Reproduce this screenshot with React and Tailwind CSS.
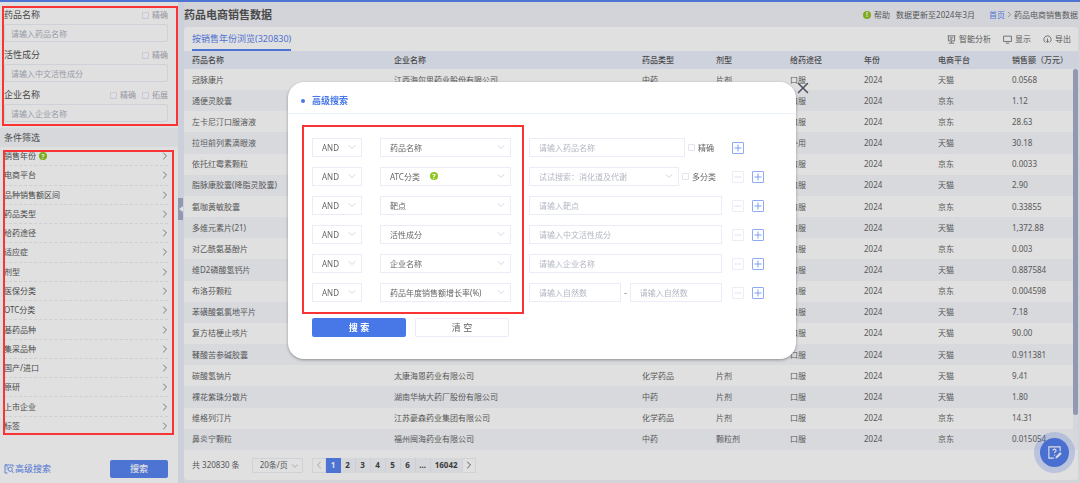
import { ChevronDown, ChevronLeft, ChevronRight, X } from "lucide-react";

const FILTERS = [
  "销售年份",
  "电商平台",
  "品种销售额区间",
  "药品类型",
  "给药途径",
  "适应症",
  "剂型",
  "医保分类",
  "OTC分类",
  "基药品种",
  "集采品种",
  "国产/进口",
  "原研",
  "上市企业",
  "标签",
];

const COLUMNS = [
  { title: "药品名称", width: "w-[202px]" },
  { title: "企业名称", width: "w-[248px]" },
  { title: "药品类型", width: "w-[74px]" },
  { title: "剂型", width: "w-[74px]" },
  { title: "给药途径", width: "w-[74px]" },
  { title: "年份", width: "w-[74px]" },
  { title: "电商平台", width: "w-[74px]" },
  { title: "销售额（万元）", width: "" },
];

const ROWS = [
  ["冠脉康片", "江西海尔思药业股份有限公司", "中药", "片剂", "口服", "2024", "天猫", "0.0568"],
  ["通便灵胶囊", "", "", "", "口服", "2024", "京东", "1.12"],
  ["左卡尼汀口服溶液", "", "", "", "口服", "2024", "京东", "28.63"],
  ["拉坦前列素滴眼液", "", "", "", "外用", "2024", "天猫", "30.18"],
  ["依托红霉素颗粒", "", "", "", "口服", "2024", "京东", "0.0033"],
  ["脂脉康胶囊(降脂灵胶囊)", "", "", "", "口服", "2024", "天猫", "2.90"],
  ["氨咖黄敏胶囊", "", "", "", "口服", "2024", "京东", "0.33855"],
  ["多维元素片(21)", "", "", "", "口服", "2024", "天猫", "1,372.88"],
  ["对乙酰氨基酚片", "", "", "", "口服", "2024", "京东", "0.003"],
  ["维D2磷酸氢钙片", "", "", "", "口服", "2024", "天猫", "0.887584"],
  ["布洛芬颗粒", "", "", "", "口服", "2024", "京东", "0.004598"],
  ["苯磺酸氨氯地平片", "", "", "", "口服", "2024", "天猫", "7.18"],
  ["复方桔梗止咳片", "", "", "", "口服", "2024", "天猫", "90.00"],
  ["鞣酸苦参碱胶囊", "", "", "", "口服", "2024", "天猫", "0.911381"],
  ["碳酸氢钠片", "太康海恩药业有限公司", "化学药品", "片剂", "口服", "2024", "天猫", "9.41"],
  ["裸花紫珠分散片", "湖南华纳大药厂股份有限公司", "中药", "片剂", "口服", "2024", "天猫", "1.80"],
  ["维格列汀片", "江苏豪森药业集团有限公司", "化学药品", "片剂", "口服", "2024", "京东", "14.31"],
  ["鼻炎宁颗粒", "福州闽海药业有限公司", "中药", "颗粒剂", "口服", "2024", "京东", "0.015054"],
];

const CONDITIONS = [
  { field: "药品名称", placeholder: "请输入药品名称", check: "精确", first: true },
  { field: "ATC分类", placeholder: "试试搜索：消化道及代谢", check: "多分类", type: "select", help: true },
  { field: "靶点", placeholder: "请输入靶点" },
  { field: "活性成分", placeholder: "请输入中文活性成分" },
  { field: "企业名称", placeholder: "请输入企业名称" },
  { field: "药品年度销售额增长率(%)", placeholder: "请输入自然数", type: "range" },
];

function GreenMark({ mark }) {
  return (
    <span className="flex size-[8px] shrink-0 items-center justify-center rounded-full bg-[#8fc31f] text-[7px] leading-none font-bold text-white">
      {mark}
    </span>
  );
}

function Check({ label, className = "text-[#a9adb8]" }) {
  return (
    <label className={`flex shrink-0 items-center gap-[3px] ${className}`}>
      <input
        type="checkbox"
        className="size-[7px] shrink-0 appearance-none rounded-[1px] border border-[#e2e5f1] bg-white"
      />
      {label}
    </label>
  );
}

function SideField({ id, label, placeholder, checks }) {
  return (
    <div>
      <div className="flex h-[18px] items-center justify-between">
        <label htmlFor={id} className="text-[9px] text-[#555]">
          {label}
        </label>
        <div className="flex gap-[6px]">
          {checks.map((c) => (
            <Check key={c} label={c} />
          ))}
        </div>
      </div>
      <input
        id={id}
        placeholder={placeholder}
        className="block h-[18px] w-full rounded-[2px] border border-[#eceef7] bg-white px-[6px] placeholder:text-[#aeb2bf]"
      />
    </div>
  );
}

function Sidebar() {
  return (
    <aside className="flex w-[178px] shrink-0 flex-col bg-white">
      <div className="relative flex flex-col gap-1 pt-1 pr-[10px] pb-[6px] pl-1">
        <SideField id="drug" label="药品名称" placeholder="请输入药品名称" checks={["精确"]} />
        <SideField id="ingredient" label="活性成分" placeholder="请输入中文活性成分" checks={["精确"]} />
        <SideField id="company" label="企业名称" placeholder="请输入企业名称" checks={["精确", "拓展"]} />
        <div className="pointer-events-none absolute top-1 right-0 bottom-[2px] left-[2px] z-20 border-2 border-[#fa3434]" />
      </div>
      <h2 className="flex h-[19px] items-center bg-[#f4f6fb] pl-1 text-[9px] text-[#555]">条件筛选</h2>
      <div className="relative flex flex-1 flex-col">
        <ul className="flex flex-1 flex-col pr-[10px] pl-1">
          {FILTERS.map((name, i) => (
            <li key={name} className="flex flex-1 border-b border-dashed border-[#ebecf1] last:border-none">
              <button className="flex w-full items-center gap-[3px] text-[#555]">
                {name}
                {i === 0 && <GreenMark mark="?" />}
                <ChevronRight className="-mr-[3px] ml-auto size-3 text-[#888]" />
              </button>
            </li>
          ))}
        </ul>
        <div className="pointer-events-none absolute top-[3px] right-1 bottom-0 left-[3px] z-20 border-2 border-[#fa3434]" />
      </div>
      <div className="flex h-12 items-end justify-between pr-[10px] pb-[5px] pl-1">
        <a href="#advanced" className="flex h-[18px] items-center text-[9px] text-[#5984f1]">
          <svg viewBox="0 0 20 20" className="mr-px size-[10px]" fill="none" stroke="currentColor" strokeWidth="1.7">
            <path d="M6 2H2v16h5M2 2h16v4M5 6h3M5 10h2" />
            <circle cx="12.5" cy="10.5" r="4.2" />
            <path d="M15.5 13.5L19 18" />
          </svg>
          高级搜索
        </a>
        <button className="h-[18px] w-[58px] rounded-[2px] bg-[#5984f1] text-[9px] font-medium text-white">搜索</button>
      </div>
    </aside>
  );
}

function Toolbar() {
  return (
    <div className="flex gap-3 pr-[7px] text-[#666]">
      <button className="flex items-center gap-[3px]">
        <svg viewBox="0 0 16 16" className="size-[9px]" fill="none" stroke="currentColor" strokeWidth="1.4">
          <path d="M1 1.5h14M2.5 2v8.5h11V2M5 5h6M5 7.5h4M8 11v3M3 14.5h10" />
        </svg>
        智能分析
      </button>
      <button className="flex items-center gap-[3px]">
        <svg viewBox="0 0 16 16" className="size-[9px]" fill="none" stroke="currentColor" strokeWidth="1.4">
          <path d="M1 2h14v9.500H1zM5 14.500h6" />
        </svg>
        显示
      </button>
      <button className="flex items-center gap-[3px]">
        <svg viewBox="0 0 16 16" className="size-[9px]" fill="none" stroke="currentColor" strokeWidth="1.4">
          <path d="M4.500 13.500a6.500 6.500 0 1 1 7 0M8 6v7M5.500 10.500L8 13l2.500-2.500" />
        </svg>
        导出
      </button>
    </div>
  );
}

function DataTable() {
  return (
    <div className="relative min-h-0 flex-1">
      <table className="h-full w-full table-fixed text-left text-[#666]">
        <thead>
          <tr className="h-[18px] bg-[#ebeffc] text-[#555]">
            {COLUMNS.map((c) => (
              <th key={c.title} className={`${c.width} pl-2 font-medium whitespace-nowrap`}>
                {c.title}
              </th>
            ))}
          </tr>
        </thead>
        <tbody>
          {ROWS.map((row) => (
            <tr key={row[0]} className="even:bg-[#f5f7fc]">
              {row.map((cell, i) => (
                <td key={i} className="pl-2 whitespace-nowrap">
                  {cell}
                </td>
              ))}
            </tr>
          ))}
        </tbody>
      </table>
      <div className="absolute top-[18px] right-0 bottom-0 w-[5px] bg-[#f3f5fb]">
        <div className="h-[346px] rounded-full bg-[#a6aecb]" />
      </div>
    </div>
  );
}

function Pager() {
  return (
    <div className="flex h-[30px] items-center pl-2 text-[#666]">
      <span>共 320830 条</span>
      <div className="relative ml-3">
        <select
          aria-label="每页条数"
          className="h-[15px] w-[51px] appearance-none rounded-[1px] border border-[#eceef5] pl-[7px]"
        >
          <option>20条/页</option>
        </select>
        <ChevronDown className="pointer-events-none absolute top-[3px] right-[3px] size-[10px] text-[#bbb]" />
      </div>
      <nav className="ml-[9px] flex h-[15px] font-bold text-[#444]">
        <button aria-label="上一页" className="flex w-[14px] items-center justify-center border border-[#eef0f5] text-[#bbb]">
          <ChevronLeft className="size-3 shrink-0" />
        </button>
        <button className="w-[15px] bg-[#5984f1] text-white">1</button>
        {["2", "3", "4", "5", "6", "..."].map((p) => (
          <button key={p} className="w-[15px] border-r border-[#e9ecf5] bg-[#f3f5fa]">
            {p}
          </button>
        ))}
        <button className="w-[31px] bg-[#f3f5fa]">16042</button>
        <button aria-label="下一页" className="flex w-[14px] items-center justify-center border border-[#eef0f5] text-[#666]">
          <ChevronRight className="size-3 shrink-0" />
        </button>
      </nav>
    </div>
  );
}

function Main() {
  return (
    <main className="flex min-w-0 flex-1 flex-col pr-[2px] pb-[3px]">
      <header className="flex h-[25px] items-center justify-between text-[#666]">
        <h1 className="text-[11px] font-bold text-[#555]">药品电商销售数据</h1>
        <div className="flex items-center">
          <button className="flex items-center gap-[3px]">
            <GreenMark mark="!" />
            帮助
          </button>
          <span className="ml-[6px]">数据更新至2024年3月</span>
          <nav className="ml-[14px] flex items-center">
            <a href="#home" className="text-[#5984f1]">
              首页
            </a>
            <ChevronRight className="size-[9px] text-[#888]" />
            <span>药品电商销售数据</span>
          </nav>
        </div>
      </header>
      <section className="flex min-h-0 flex-1 flex-col rounded-[3px] bg-white">
        <div className="flex h-6 items-center justify-between pl-2">
          <button className="flex h-full items-center border-b-2 border-[#5984f1] pt-[2px] text-[9px] text-[#5984f1]">
            按销售年份浏览(320830)
          </button>
          <Toolbar />
        </div>
        <DataTable />
        <Pager />
      </section>
    </main>
  );
}

function Dropdown({ label, text, className, tone = "text-[#666]", children }) {
  return (
    <div className={`relative shrink-0 ${className}`}>
      <select
        aria-label={label}
        className={`block h-[19px] w-full appearance-none border border-[#eaedf8] bg-white pl-[9px] ${tone}`}
      >
        <option>{text}</option>
      </select>
      {children}
      <ChevronDown className="pointer-events-none absolute top-[3px] right-1 size-3 text-[#c4c8d2]" strokeWidth={1.5} />
    </div>
  );
}

function TextBox({ placeholder, label }) {
  return (
    <input
      aria-label={label}
      placeholder={placeholder}
      className="h-[19px] w-full min-w-0 flex-1 border border-[#eaedf8] px-[9px] placeholder:text-[#b3b7c3]"
    />
  );
}

function SquareButton({ plus }) {
  return (
    <button
      aria-label={plus ? "添加条件" : "删除条件"}
      className={`size-[12px] shrink-0 rounded-[1px] border ${plus ? "border-[#8eaaf3] text-[#7f9ff2]" : "border-[#eceef7] text-[#dfe3f0]"}`}
    >
      <svg viewBox="0 0 10 10" className="size-full" fill="none" stroke="currentColor">
        <path d={plus ? "M1.500 5h7M5 1.500v7" : "M1.500 5h7"} />
      </svg>
    </button>
  );
}

function Condition({ item }) {
  return (
    <div className="flex items-center">
      <Dropdown label="逻辑关系" text="AND" className="w-[50px]" />
      <Dropdown label="检索字段" text={item.field} className="ml-[18px] w-[131px]">
        {item.help && (
          <span className="absolute top-[5px] left-[50px]">
            <GreenMark mark="?" />
          </span>
        )}
      </Dropdown>
      <div className="mr-[10px] ml-[18px] flex w-[193px] items-center gap-[3px]">
        {item.type === "select" ? (
          <Dropdown label={item.field} text={item.placeholder} className="w-[150px]" tone="text-[#b3b7c3]" />
        ) : (
          <TextBox label={item.field} placeholder={item.placeholder} />
        )}
        {item.type === "range" && (
          <>
            <span className="text-[#666]">-</span>
            <TextBox label={`${item.field}上限`} placeholder={item.placeholder} />
          </>
        )}
        {item.check && (
          <div className="w-[34px] shrink-0 whitespace-nowrap">
            <Check label={item.check} className="text-[#666]" />
          </div>
        )}
      </div>
      <div className="flex gap-2">
        {!item.first && <SquareButton />}
        <SquareButton plus />
      </div>
    </div>
  );
}

function AdvancedSearch() {
  return (
    <div className="fixed inset-0 z-30 flex items-start justify-center pt-[82px] pl-1">
      <div role="dialog" aria-label="高级搜索" className="relative w-[508px] rounded-2xl bg-white shadow-[0_1px_3px_rgba(0,0,0,0.35)]">
        <button aria-label="关闭" className="absolute -top-[3px] left-full -ml-[2px] text-[#4d4f5c]">
          <X className="size-[18px]" />
        </button>
        <h2 className="flex h-8 items-center gap-[7px] border-b border-[#eaf1f8] pt-[6px] pl-[13px] text-[9px] font-bold text-[#4878e8]">
          <span className="size-1 rounded-full bg-[#4878e8]" />
          高级搜索
        </h2>
        <form className="pt-6 pb-[22px] pl-6">
          <div className="relative flex flex-col gap-[10px]">
            {CONDITIONS.map((item) => (
              <Condition key={item.field} item={item} />
            ))}
            <div className="pointer-events-none absolute -top-[13px] -bottom-3 -left-[10px] w-[222px] border-2 border-[#fa3434]" />
          </div>
          <div className="mt-4 flex gap-[9px]">
            <button type="button" className="h-[19px] w-[94px] rounded-[2px] bg-[#4878e8] text-[9px] font-bold text-white">
              搜 索
            </button>
            <button type="reset" className="h-[19px] w-[94px] rounded-[2px] border border-[#e9ecf7] text-[9px] text-[#666]">
              清 空
            </button>
          </div>
        </form>
      </div>
    </div>
  );
}

export default function App() {
  return (
    <div className="flex h-screen flex-col bg-[#f1f2f8] font-['Noto_Sans','Noto_Sans_CJK_SC',sans-serif] text-[8px] leading-[12px]">
      <div className="h-[2px] shrink-0 bg-[#5984f1]" />
      <div className="flex min-h-0 flex-1">
        <Sidebar />
        <div className="relative w-[6px] shrink-0 bg-[#e9edfa]">
          <button
            aria-label="收起筛选"
            className="absolute top-[196px] left-0 flex h-[22px] w-[5px] items-center justify-center bg-[#a6aecb] text-white"
          >
            <svg viewBox="0 0 4 6" className="h-[6px] w-1" fill="currentColor">
              <path d="M4 0v6L0 3z" />
            </svg>
          </button>
        </div>
        <Main />
      </div>
      {/* floating feedback button */}
      <button
        aria-label="意见反馈"
        className="fixed right-[5px] bottom-[10px] flex size-[41px] items-center justify-center rounded-full bg-[#5984f1]/25"
      >
        <span className="flex size-[29px] items-center justify-center rounded-full bg-[#5480ee] text-white">
          <svg viewBox="0 0 24 24" className="size-[15px]" fill="none" stroke="currentColor" strokeWidth="1.8">
            <path d="M21 10V3H3v18h8" />
            <path d="M9.500 9a2.500 2.500 0 1 1 3.500 2.300c-.7.400-1 .9-1 1.700M12 15.500v1.500" />
            <path d="M14 21l1-3 6-6 2 2-6 6z" fill="currentColor" strokeWidth="1" />
          </svg>
        </span>
      </button>
      <div className="fixed inset-0 z-10 bg-black/12" />
      <AdvancedSearch />
    </div>
  );
}
